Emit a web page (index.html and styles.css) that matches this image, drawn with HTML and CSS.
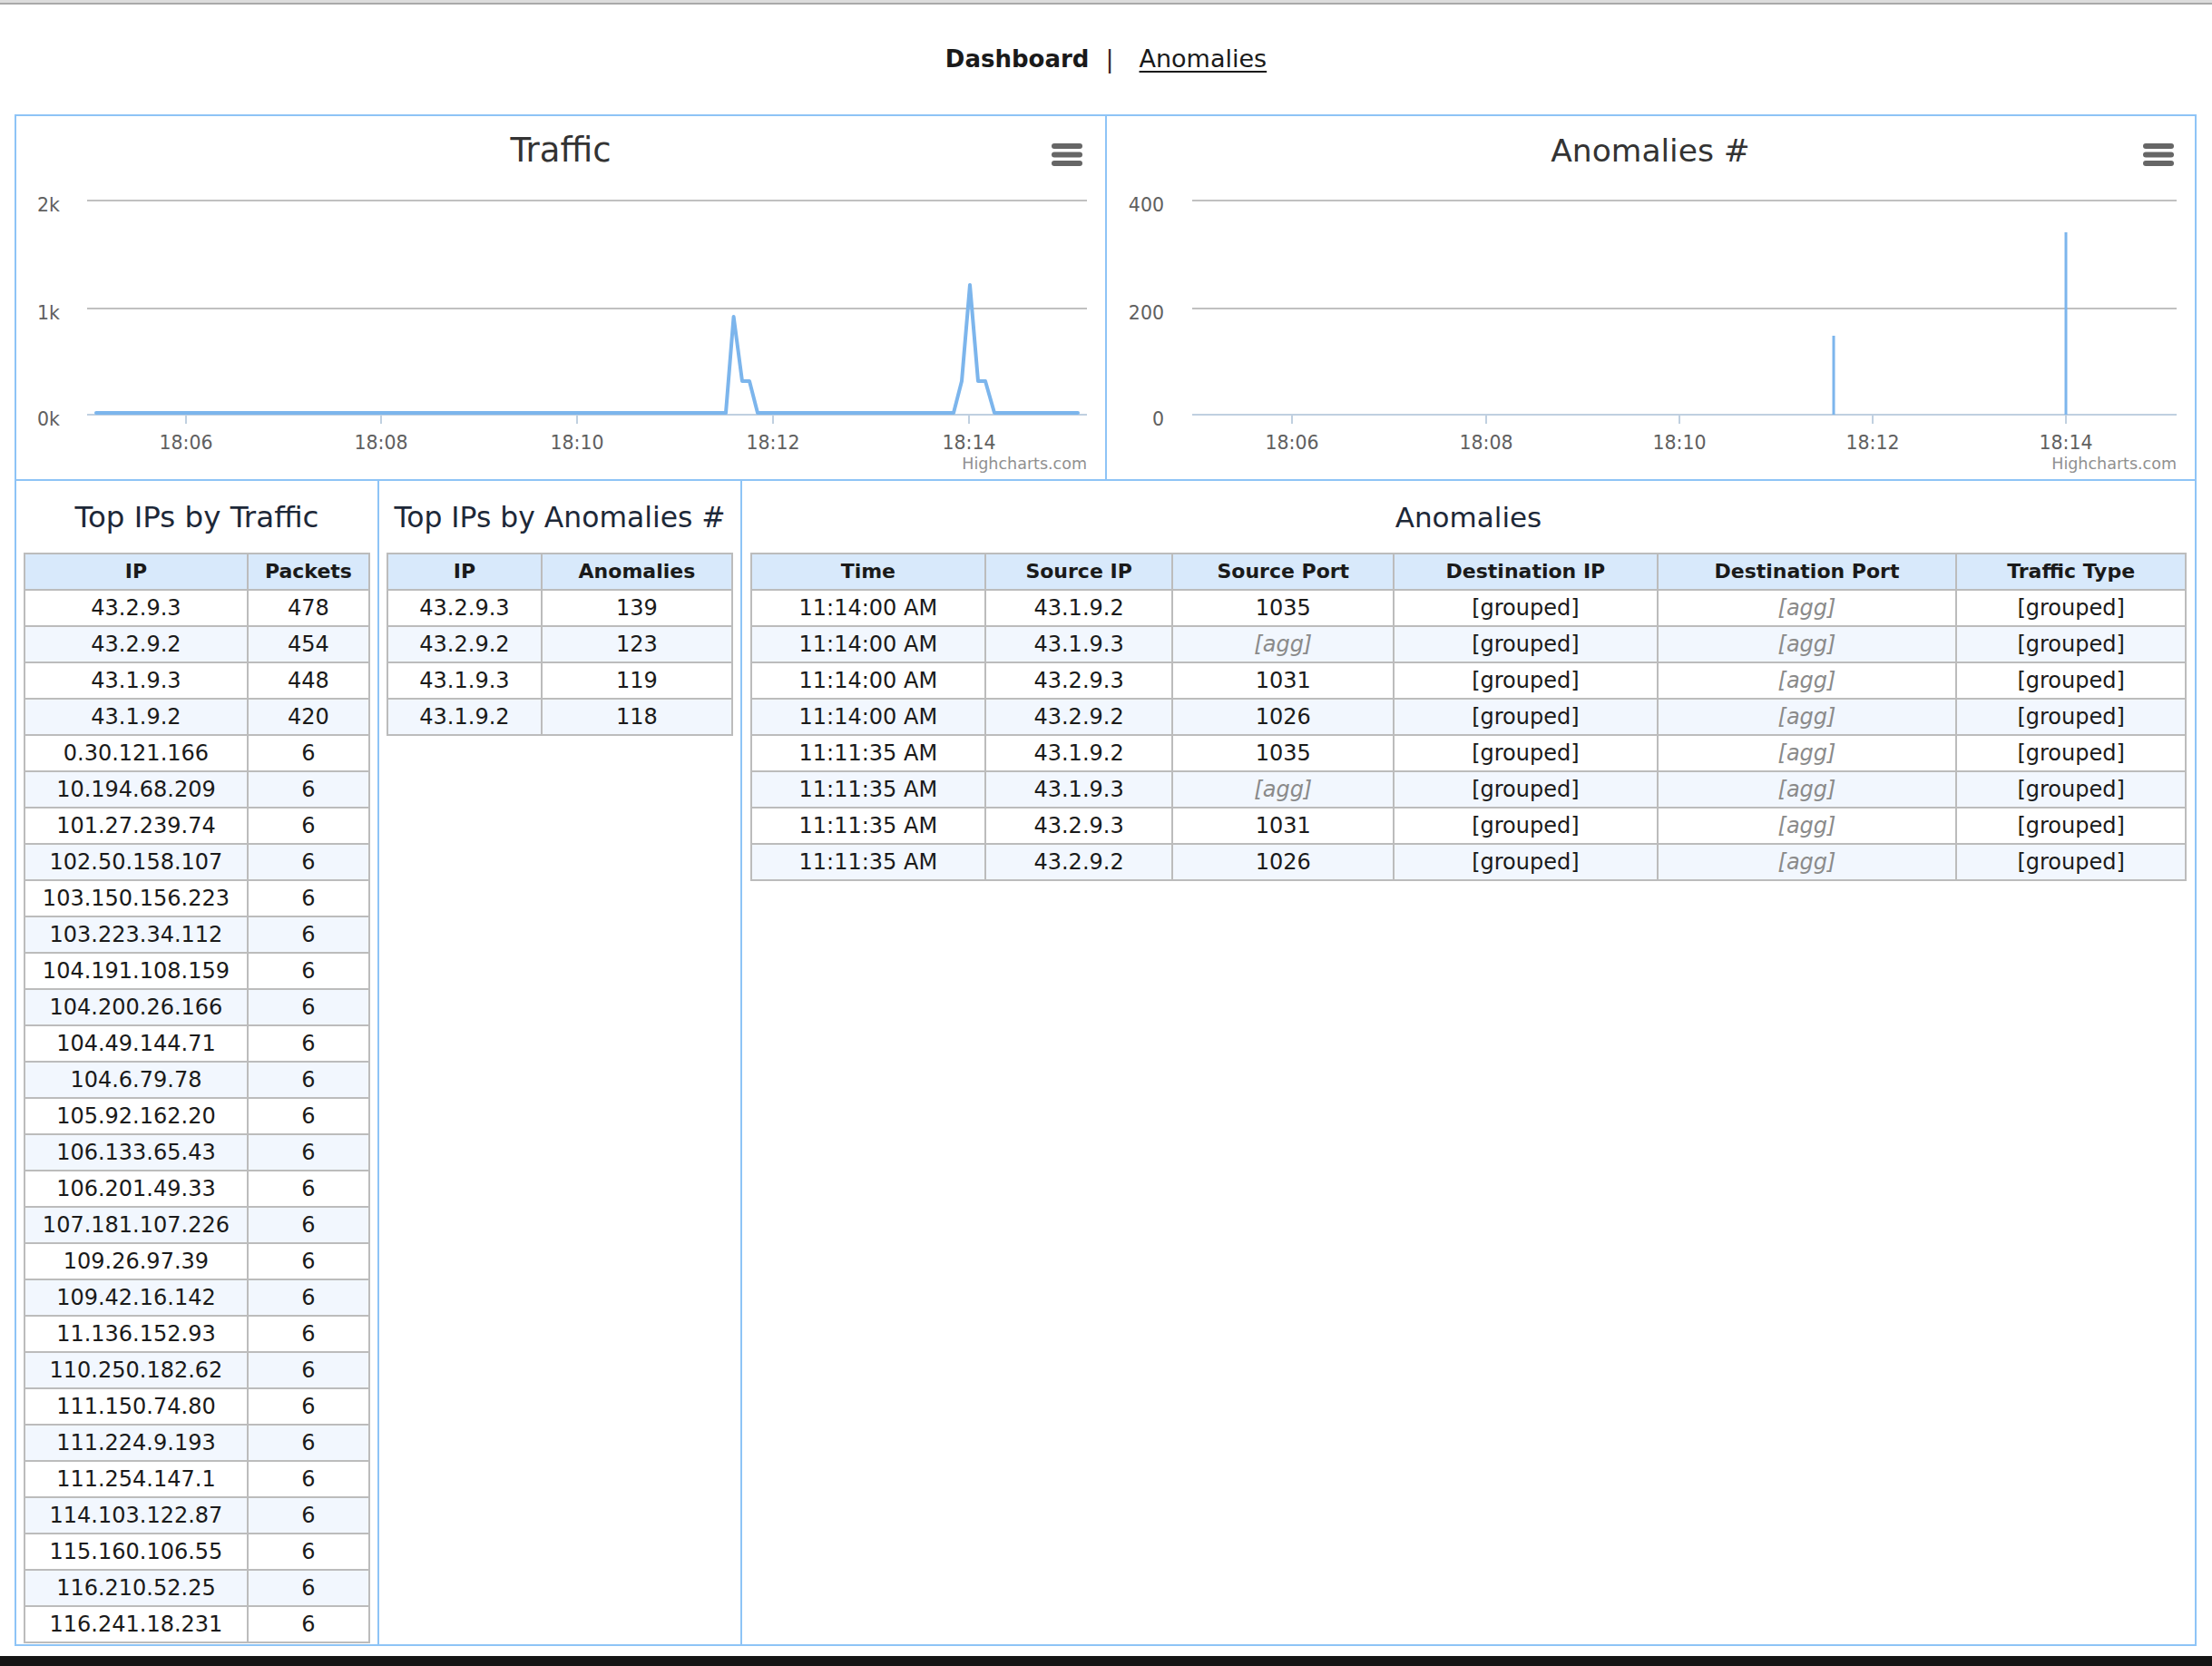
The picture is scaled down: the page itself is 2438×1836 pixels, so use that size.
FILE: index.html
```html
<!DOCTYPE html>
<html lang="en">
<head>
<meta charset="utf-8">
<title>Dashboard</title>
<link rel="stylesheet" href="styles.css">
</head>
<body>
<div class="topbar"></div>
<nav class="nav">
  <a class="nav-current">Dashboard</a><span class="nav-sep">|</span><a class="nav-link" href="#">Anomalies</a>
</nav>
<div class="dashboard">
  <div class="charts-row">
    <div class="chart-cell chart-left">
      <svg class="chart" width="1200" height="400" viewBox="0 0 1200 400">
        <text class="hc-title" x="600" y="50" text-anchor="middle">Traffic</text>
        <g class="hc-menu">
          <rect x="1141" y="30" width="34" height="6" rx="3"/>
          <rect x="1141" y="39.5" width="34" height="6" rx="3"/>
          <rect x="1141" y="49" width="34" height="6" rx="3"/>
        </g>
        <g class="hc-grid">
          <line x1="78" y1="93" x2="1180" y2="93"/>
          <line x1="78" y1="212" x2="1180" y2="212"/>
        </g>
        <g class="hc-axis">
          <line x1="78" y1="329" x2="1180" y2="329"/>
          <line x1="187" y1="329" x2="187" y2="339"/>
          <line x1="402" y1="329" x2="402" y2="339"/>
          <line x1="618" y1="329" x2="618" y2="339"/>
          <line x1="834" y1="329" x2="834" y2="339"/>
          <line x1="1050" y1="329" x2="1050" y2="339"/>
        </g>
        <g class="hc-label">
          <text x="48" y="105" text-anchor="end">2k</text>
          <text x="48" y="224" text-anchor="end">1k</text>
          <text x="48" y="341" text-anchor="end">0k</text>
          <text x="187" y="367" text-anchor="middle">18:06</text>
          <text x="402" y="367" text-anchor="middle">18:08</text>
          <text x="618" y="367" text-anchor="middle">18:10</text>
          <text x="834" y="367" text-anchor="middle">18:12</text>
          <text x="1050" y="367" text-anchor="middle">18:14</text>
        </g>
        <polyline class="hc-series" points="88,327 782,327 790.6,221 800,292 808,292 817,327 1033,327 1042,292 1051,186 1060,292 1068,292 1078,327 1170,327"/>
        <text class="hc-credits" x="1180" y="389" text-anchor="end">Highcharts.com</text>
      </svg>
    </div>
    <div class="chart-cell chart-right">
      <svg class="chart" width="1199" height="400" viewBox="0 0 1199 400">
        <text class="hc-title hc-title-narrow" x="599" y="50" text-anchor="middle">Anomalies #</text>
        <g class="hc-menu">
          <rect x="1142" y="30" width="34" height="6" rx="3"/>
          <rect x="1142" y="39.5" width="34" height="6" rx="3"/>
          <rect x="1142" y="49" width="34" height="6" rx="3"/>
        </g>
        <g class="hc-grid">
          <line x1="94" y1="93" x2="1179" y2="93"/>
          <line x1="94" y1="212" x2="1179" y2="212"/>
        </g>
        <g class="hc-axis">
          <line x1="94" y1="329" x2="1179" y2="329"/>
          <line x1="204" y1="329" x2="204" y2="339"/>
          <line x1="418" y1="329" x2="418" y2="339"/>
          <line x1="631" y1="329" x2="631" y2="339"/>
          <line x1="844" y1="329" x2="844" y2="339"/>
          <line x1="1057" y1="329" x2="1057" y2="339"/>
        </g>
        <g class="hc-label">
          <text x="63" y="105" text-anchor="end">400</text>
          <text x="63" y="224" text-anchor="end">200</text>
          <text x="63" y="341" text-anchor="end">0</text>
          <text x="204" y="367" text-anchor="middle">18:06</text>
          <text x="418" y="367" text-anchor="middle">18:08</text>
          <text x="631" y="367" text-anchor="middle">18:10</text>
          <text x="844" y="367" text-anchor="middle">18:12</text>
          <text x="1057" y="367" text-anchor="middle">18:14</text>
        </g>
        <g class="hc-bars">
          <line x1="801" y1="242" x2="801" y2="329"/>
          <line x1="1057" y1="128" x2="1057" y2="329"/>
        </g>
        <text class="hc-credits" x="1179" y="389" text-anchor="end">Highcharts.com</text>
      </svg>
    </div>
  </div>
  <div class="tables-row">
    <section class="panel panel-narrow">
      <h3 class="panel-title">Top IPs by Traffic</h3>
      <table class="grid grid-traffic">
        <colgroup><col class="c-ip"><col></colgroup>
        <thead><tr><th>IP</th><th>Packets</th></tr></thead>
        <tbody>
          <tr><td>43.2.9.3</td><td>478</td></tr>
          <tr><td>43.2.9.2</td><td>454</td></tr>
          <tr><td>43.1.9.3</td><td>448</td></tr>
          <tr><td>43.1.9.2</td><td>420</td></tr>
          <tr><td>0.30.121.166</td><td>6</td></tr>
          <tr><td>10.194.68.209</td><td>6</td></tr>
          <tr><td>101.27.239.74</td><td>6</td></tr>
          <tr><td>102.50.158.107</td><td>6</td></tr>
          <tr><td>103.150.156.223</td><td>6</td></tr>
          <tr><td>103.223.34.112</td><td>6</td></tr>
          <tr><td>104.191.108.159</td><td>6</td></tr>
          <tr><td>104.200.26.166</td><td>6</td></tr>
          <tr><td>104.49.144.71</td><td>6</td></tr>
          <tr><td>104.6.79.78</td><td>6</td></tr>
          <tr><td>105.92.162.20</td><td>6</td></tr>
          <tr><td>106.133.65.43</td><td>6</td></tr>
          <tr><td>106.201.49.33</td><td>6</td></tr>
          <tr><td>107.181.107.226</td><td>6</td></tr>
          <tr><td>109.26.97.39</td><td>6</td></tr>
          <tr><td>109.42.16.142</td><td>6</td></tr>
          <tr><td>11.136.152.93</td><td>6</td></tr>
          <tr><td>110.250.182.62</td><td>6</td></tr>
          <tr><td>111.150.74.80</td><td>6</td></tr>
          <tr><td>111.224.9.193</td><td>6</td></tr>
          <tr><td>111.254.147.1</td><td>6</td></tr>
          <tr><td>114.103.122.87</td><td>6</td></tr>
          <tr><td>115.160.106.55</td><td>6</td></tr>
          <tr><td>116.210.52.25</td><td>6</td></tr>
          <tr><td>116.241.18.231</td><td>6</td></tr>
        </tbody>
      </table>
    </section>
    <section class="panel panel-narrow">
      <h3 class="panel-title panel-title-tight">Top IPs by Anomalies #</h3>
      <table class="grid grid-anom-ip">
        <colgroup><col class="c-ip2"><col></colgroup>
        <thead><tr><th>IP</th><th>Anomalies</th></tr></thead>
        <tbody>
          <tr><td>43.2.9.3</td><td>139</td></tr>
          <tr><td>43.2.9.2</td><td>123</td></tr>
          <tr><td>43.1.9.3</td><td>119</td></tr>
          <tr><td>43.1.9.2</td><td>118</td></tr>
        </tbody>
      </table>
    </section>
    <section class="panel panel-wide">
      <h3 class="panel-title panel-title-wide">Anomalies</h3>
      <table class="grid grid-anomalies">
        <colgroup>
          <col class="c-time"><col class="c-sip"><col class="c-sport"><col class="c-dip"><col class="c-dport"><col class="c-type">
        </colgroup>
        <thead><tr><th>Time</th><th>Source IP</th><th>Source Port</th><th>Destination IP</th><th>Destination Port</th><th>Traffic Type</th></tr></thead>
        <tbody>
          <tr><td>11:14:00 AM</td><td>43.1.9.2</td><td>1035</td><td>[grouped]</td><td class="agg">[agg]</td><td>[grouped]</td></tr>
          <tr><td>11:14:00 AM</td><td>43.1.9.3</td><td class="agg">[agg]</td><td>[grouped]</td><td class="agg">[agg]</td><td>[grouped]</td></tr>
          <tr><td>11:14:00 AM</td><td>43.2.9.3</td><td>1031</td><td>[grouped]</td><td class="agg">[agg]</td><td>[grouped]</td></tr>
          <tr><td>11:14:00 AM</td><td>43.2.9.2</td><td>1026</td><td>[grouped]</td><td class="agg">[agg]</td><td>[grouped]</td></tr>
          <tr><td>11:11:35 AM</td><td>43.1.9.2</td><td>1035</td><td>[grouped]</td><td class="agg">[agg]</td><td>[grouped]</td></tr>
          <tr><td>11:11:35 AM</td><td>43.1.9.3</td><td class="agg">[agg]</td><td>[grouped]</td><td class="agg">[agg]</td><td>[grouped]</td></tr>
          <tr><td>11:11:35 AM</td><td>43.2.9.3</td><td>1031</td><td>[grouped]</td><td class="agg">[agg]</td><td>[grouped]</td></tr>
          <tr><td>11:11:35 AM</td><td>43.2.9.2</td><td>1026</td><td>[grouped]</td><td class="agg">[agg]</td><td>[grouped]</td></tr>
        </tbody>
      </table>
    </section>
  </div>
</div>
<div class="dock"></div>
</body>
</html>
```
FILE: styles.css
```css
html, body {
  margin: 0;
  padding: 0;
  background: #ffffff;
}
body {
  font-family: "DejaVu Sans", "Liberation Sans", sans-serif;
  color: #1a1a1a;
  width: 2438px;
}
.topbar {
  height: 3px;
  background: #dcdcdc;
  border-bottom: 2px solid #a9a9a9;
}
.nav {
  height: 121px;
  display: flex;
  justify-content: center;
  align-items: center;
  padding-bottom: 2px;
  box-sizing: border-box;
}
.nav-current {
  font-weight: bold;
  font-size: 26px;
  color: #1a1a1a;
}
.nav-sep {
  font-size: 27px;
  color: #3d2222;
  margin: 0 28px 0 18px;
}
.nav-link {
  font-size: 27px;
  color: #1a1a1a;
  text-decoration: underline;
  text-underline-offset: 4px;
  text-decoration-thickness: 2px;
}
.dashboard {
  margin: 0 17px 0 16px;
  border: 2px solid #8ec4f6;
}
.charts-row {
  display: flex;
  border-bottom: 2px solid #8ec4f6;
}
.chart-cell {
  height: 400px;
}
.chart-left {
  width: 1200px;
  border-right: 2px solid #8ec4f6;
}
.chart-right {
  flex: 1;
}
.chart {
  display: block;
}
.hc-title {
  font-family: "DejaVu Sans", sans-serif;
  font-size: 37px;
  fill: #333333;
}
.hc-title-narrow {
  font-size: 34.5px;
}
.hc-menu rect {
  fill: #666666;
}
.hc-grid line {
  stroke: #c0c0c0;
  stroke-width: 2;
}
.hc-axis line {
  stroke: #c0d0e0;
  stroke-width: 2;
}
.hc-label text {
  font-family: "DejaVu Sans", sans-serif;
  font-size: 20.5px;
  fill: #606060;
}
.hc-series {
  fill: none;
  stroke: #7cb5ec;
  stroke-width: 4;
  stroke-linejoin: round;
  stroke-linecap: round;
}
.hc-bars line {
  stroke: #7cb5ec;
  stroke-width: 3;
}
.hc-credits {
  font-family: "DejaVu Sans", sans-serif;
  font-size: 17.5px;
  fill: #909090;
}
.tables-row {
  display: flex;
}
.panel {
  box-sizing: border-box;
  padding: 0 8px 1px;
}
.panel-narrow {
  width: 400px;
  border-right: 2px solid #8ec4f6;
}
.panel-wide {
  flex: 1;
  padding: 0 9px 1px;
}
.panel-title {
  margin: 0;
  height: 79px;
  line-height: 80px;
  text-align: center;
  font-weight: normal;
  font-size: 32.5px;
  color: #1d2838;
  white-space: nowrap;
}
.panel-title-tight {
  font-size: 31.4px;
}
.panel-title-wide {
  font-size: 31px;
}
.grid {
  width: 100%;
  table-layout: fixed;
  border-collapse: collapse;
  border: 2px solid #bcbcbc;
  font-size: 24px;
}
.grid th, .grid td {
  border: 2px solid #bcbcbc;
  height: 38px;
  padding: 0;
  text-align: center;
  vertical-align: middle;
  white-space: nowrap;
  line-height: 36px;
}
.grid th {
  background: #d8e9fb;
  font-size: 22px;
  font-weight: bold;
  color: #1a1a1a;
}
.grid tbody tr:nth-child(even) td {
  background: #f2f7fe;
}
.grid td.agg {
  font-style: italic;
  color: #8a8a8a;
}
.c-ip { width: 64.7%; }
.c-ip2 { width: 44.7%; }
.c-time { width: 16.3%; }
.c-sip { width: 13.08%; }
.c-sport { width: 15.41%; }
.c-dip { width: 18.38%; }
.c-dport { width: 20.85%; }
.c-type { width: 15.98%; }
.dock {
  margin-top: 11px;
  height: 13px;
  background: #151515;
}
```
